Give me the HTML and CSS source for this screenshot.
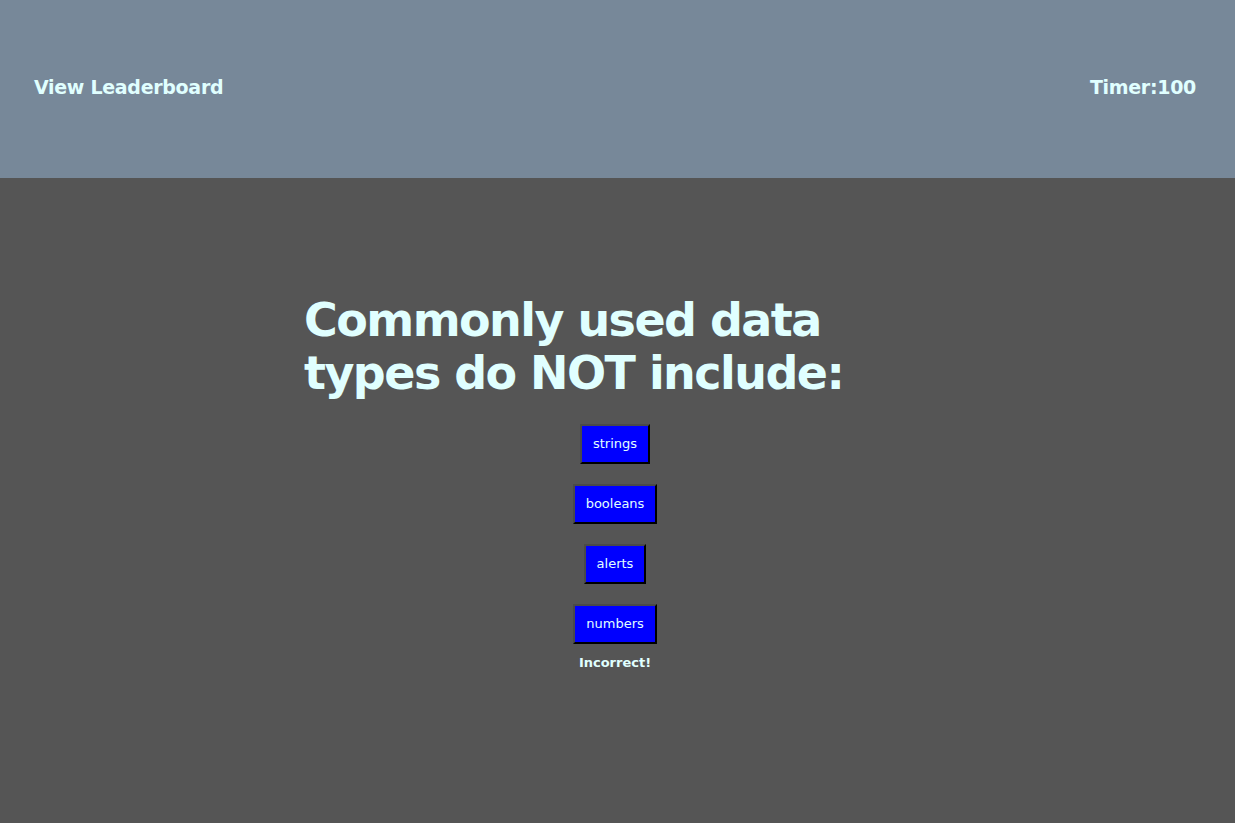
FILE: index.html
```html
<!DOCTYPE html>
<html>
<head>
<meta charset="utf-8">
<link rel="stylesheet" href="styles.css">
</head>
<body>
<header class="top">
  <a class="leader">View Leaderboard</a>
  <span class="timer">Timer:100</span>
</header>
<main class="quiz">
  <h1 class="question">Commonly used data types do NOT include:</h1>
  <div class="answers">
    <button class="answer">strings</button>
    <button class="answer">booleans</button>
    <button class="answer">alerts</button>
    <button class="answer">numbers</button>
  </div>
  <p class="result">Incorrect!</p>
</main>
</body>
</html>
```
FILE: styles.css
```css
html, body {
  margin: 0;
  padding: 0;
  height: 100%;
}
body {
  background: #555555;
  font-family: "DejaVu Sans", Verdana, sans-serif;
  color: #e0ffff;
}
.top {
  height: 178px;
  background: #778899;
  display: flex;
  align-items: center;
  justify-content: space-between;
  padding: 0 39px 0 34px;
  box-sizing: border-box;
}
.leader, .timer {
  font-weight: bold;
  font-size: 19px;
  letter-spacing: -0.3px;
  color: #e0ffff;
  margin-top: -4px;
}
.quiz {
  width: 622px;
  margin: 0 0 0 304px;
  padding-top: 116px;
  display: flex;
  flex-direction: column;
}
.question {
  margin: 0;
  font-size: 46px;
  letter-spacing: -1.55px;
  line-height: 53px;
  font-weight: bold;
}
.answers {
  display: flex;
  flex-direction: column;
  align-items: center;
  gap: 20px;
  margin-top: 24px;
}
.answer {
  font-family: "DejaVu Sans", Verdana, sans-serif;
  font-size: 13px;
  line-height: 16px;
  padding: 10px 11px;
  background: #0000ff;
  color: #e0ffff;
  border-style: solid;
  border-width: 2px;
  border-color: #4a4a4a #000 #000 #4a4a4a;
}
.result {
  margin: 11px 0 0;
  text-align: center;
  font-weight: bold;
  font-size: 13px;
}
```
